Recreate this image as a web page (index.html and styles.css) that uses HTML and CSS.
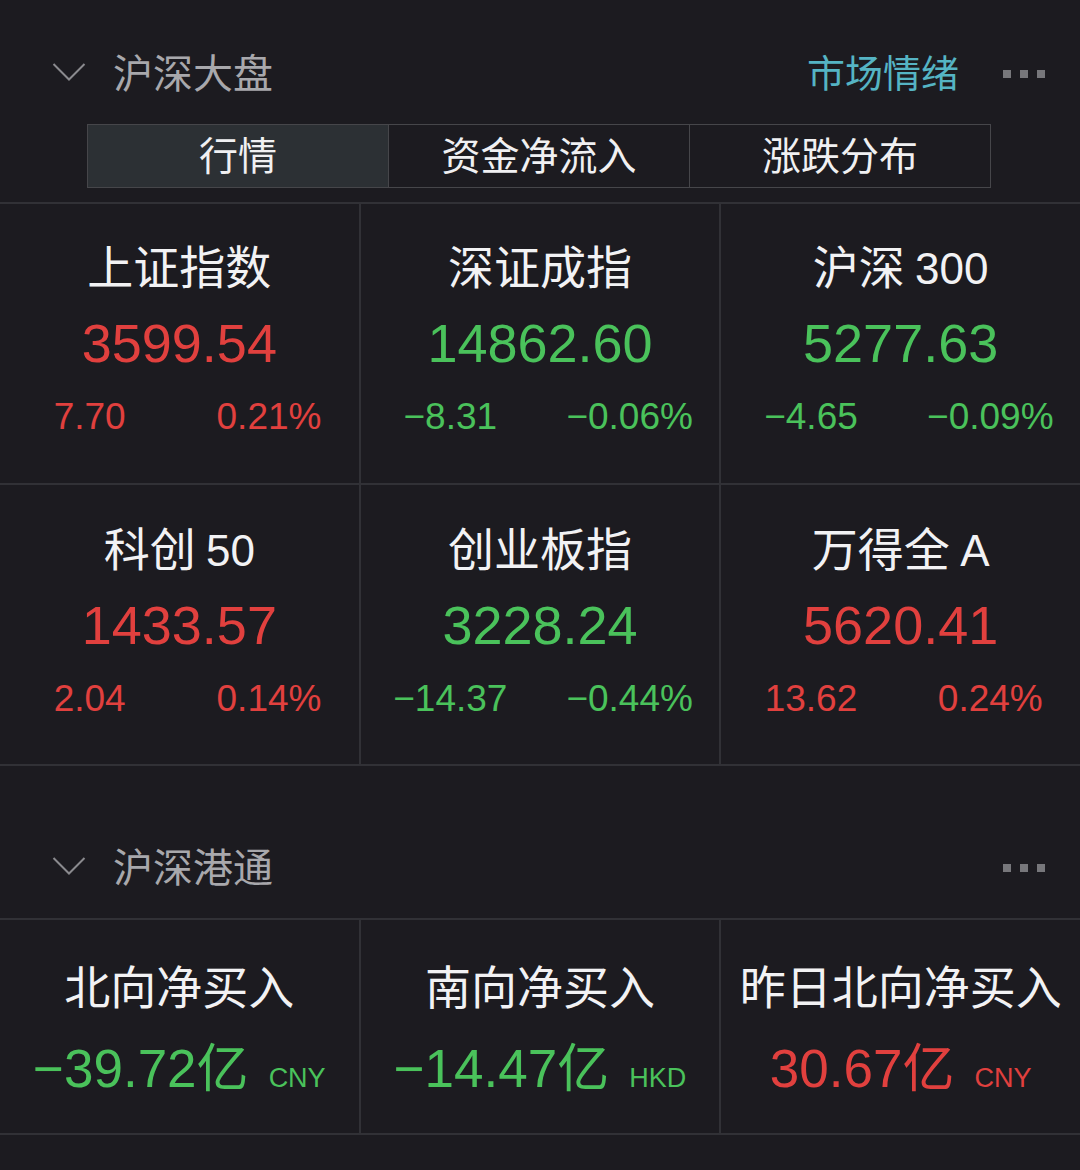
FILE: index.html
```html
<!DOCTYPE html>
<html lang="zh-CN">
<head>
<meta charset="utf-8">
<title>沪深大盘</title>
<link rel="stylesheet" href="styles.css">
</head>
<body>
<main class="page">
  <section class="section">
    <header class="section-head head-first">
      <svg class="chevron" width="34" height="20" viewBox="0 0 34 20"><polyline points="1.5,2 17,17.5 32.5,2" fill="none" stroke="#8a8a8e" stroke-width="2"/></svg>
      <h2 class="section-title">沪深大盘</h2>
      <span class="spacer"></span>
      <a class="mood">市场情绪</a>
      <span class="more"><i></i><i></i><i></i></span>
    </header>
    <nav class="tabs">
      <div class="tab active">行情</div>
      <div class="tab">资金净流入</div>
      <div class="tab">涨跌分布</div>
    </nav>
    <div class="grid grid-index">
      <div class="cell">
        <div class="name">上证指数</div>
        <div class="value up">3599.54</div>
        <div class="sub up"><span>7.70</span><span>0.21%</span></div>
      </div>
      <div class="cell">
        <div class="name">深证成指</div>
        <div class="value down">14862.60</div>
        <div class="sub down"><span>−8.31</span><span>−0.06%</span></div>
      </div>
      <div class="cell">
        <div class="name">沪深 <span class="num">300</span></div>
        <div class="value down">5277.63</div>
        <div class="sub down"><span>−4.65</span><span>−0.09%</span></div>
      </div>
      <div class="cell row2">
        <div class="name">科创 <span class="num">50</span></div>
        <div class="value up">1433.57</div>
        <div class="sub up"><span>2.04</span><span>0.14%</span></div>
      </div>
      <div class="cell row2">
        <div class="name">创业板指</div>
        <div class="value down">3228.24</div>
        <div class="sub down"><span>−14.37</span><span>−0.44%</span></div>
      </div>
      <div class="cell row2">
        <div class="name">万得全 <span class="num">A</span></div>
        <div class="value up">5620.41</div>
        <div class="sub up"><span>13.62</span><span>0.24%</span></div>
      </div>
    </div>
  </section>

  <section class="section">
    <header class="section-head head-second">
      <svg class="chevron" width="34" height="20" viewBox="0 0 34 20"><polyline points="1.5,2 17,17.5 32.5,2" fill="none" stroke="#8a8a8e" stroke-width="2"/></svg>
      <h2 class="section-title">沪深港通</h2>
      <span class="spacer"></span>
      <span class="more"><i></i><i></i><i></i></span>
    </header>
    <div class="grid grid-flow">
      <div class="cell flow">
        <div class="name">北向净买入</div>
        <div class="value down">−39.72<span class="unit">亿</span><span class="cur">CNY</span></div>
      </div>
      <div class="cell flow">
        <div class="name">南向净买入</div>
        <div class="value down">−14.47<span class="unit">亿</span><span class="cur">HKD</span></div>
      </div>
      <div class="cell flow">
        <div class="name">昨日北向净买入</div>
        <div class="value up">30.67<span class="unit">亿</span><span class="cur">CNY</span></div>
      </div>
    </div>
  </section>
</main>
</body>
</html>
```
FILE: styles.css
```css
* { box-sizing: border-box; }

html, body {
  margin: 0;
  padding: 0;
  background: #1c1b20;
}

body {
  width: 1080px;
  height: 1170px;
  overflow: hidden;
  font-family: "Noto Sans CJK SC", "Liberation Sans", sans-serif;
  color: #ececee;
}

.page {
  width: 1080px;
}

.section-head {
  display: flex;
  align-items: center;
  height: 102px;
  padding-left: 52px;
  padding-right: 35px;
  box-sizing: content-box;
}

.head-first { padding-top: 22px; }
.head-second { padding-top: 50px; }

.chevron {
  flex: none;
  display: block;
  margin-top: -2px;
}

.section-title {
  margin: -5px 0 0 27px;
  font-size: 40px;
  font-weight: 400;
  color: #a8a8ac;
  line-height: 1;
  letter-spacing: 0;
}

.spacer { flex: 1; }

.mood {
  font-size: 38px;
  line-height: 1;
  color: #55b4c4;
  margin-right: 44px;
  margin-top: -4px;
}

.more {
  display: flex;
  gap: 9px;
  margin-top: 2px;
}

.more i {
  display: block;
  width: 8px;
  height: 8px;
  background: #77777b;
}

.tabs {
  display: flex;
  width: 904px;
  height: 64px;
  margin: 0 0 14px 87px;
  border: 1.5px solid #46464a;
}

.tab {
  flex: 1;
  display: flex;
  align-items: center;
  justify-content: center;
  font-size: 39px;
  color: #f0f0f2;
  border-left: 1.5px solid #46464a;
  line-height: 1;
  padding-bottom: 5px;
}

.tab:first-child { border-left: none; }

.tab.active {
  background: #2c3034;
}

.grid {
  display: grid;
  grid-template-columns: repeat(3, 1fr);
  gap: 2px;
  background: #313136;
  border-top: 2px solid #313136;
  border-bottom: 2px solid #313136;
}

.cell {
  background: #1c1b20;
  display: flex;
  flex-direction: column;
  align-items: stretch;
  text-align: center;
  padding-top: 30px;
  height: 279px;
}

.cell.row2 { padding-top: 31px; }

.name {
  font-size: 46px;
  line-height: 60px;
  height: 60px;
  color: #f2f2f4;
  white-space: nowrap;
}

.name .num {
  font-family: "Liberation Sans", sans-serif;
  font-size: 44px;
  line-height: 1;
}

.value {
  font-family: "Liberation Sans", "Noto Sans CJK SC", sans-serif;
  font-size: 54px;
  line-height: 90px;
  height: 94px;
  padding-top: 4px;
  white-space: nowrap;
}

.sub {
  display: flex;
  font-family: "Liberation Sans", sans-serif;
  font-size: 37px;
  line-height: 58px;
  height: 58px;
}

.sub span {
  flex: 1;
  text-align: center;
}

.up { color: #e1403e; }
.down { color: #4ac25b; }

.cell.flow {
  height: 213px;
  padding-top: 34px;
}

.flow .value {
  line-height: 100px;
  height: 108px;
  padding-top: 5px;
  font-size: 53px;
}

.unit {
  font-family: "Noto Sans CJK SC", sans-serif;
  font-size: 52px;
  line-height: 1;
}

.cur {
  font-family: "Liberation Sans", sans-serif;
  font-size: 27px;
  line-height: 1;
  margin-left: 20px;
}
```
